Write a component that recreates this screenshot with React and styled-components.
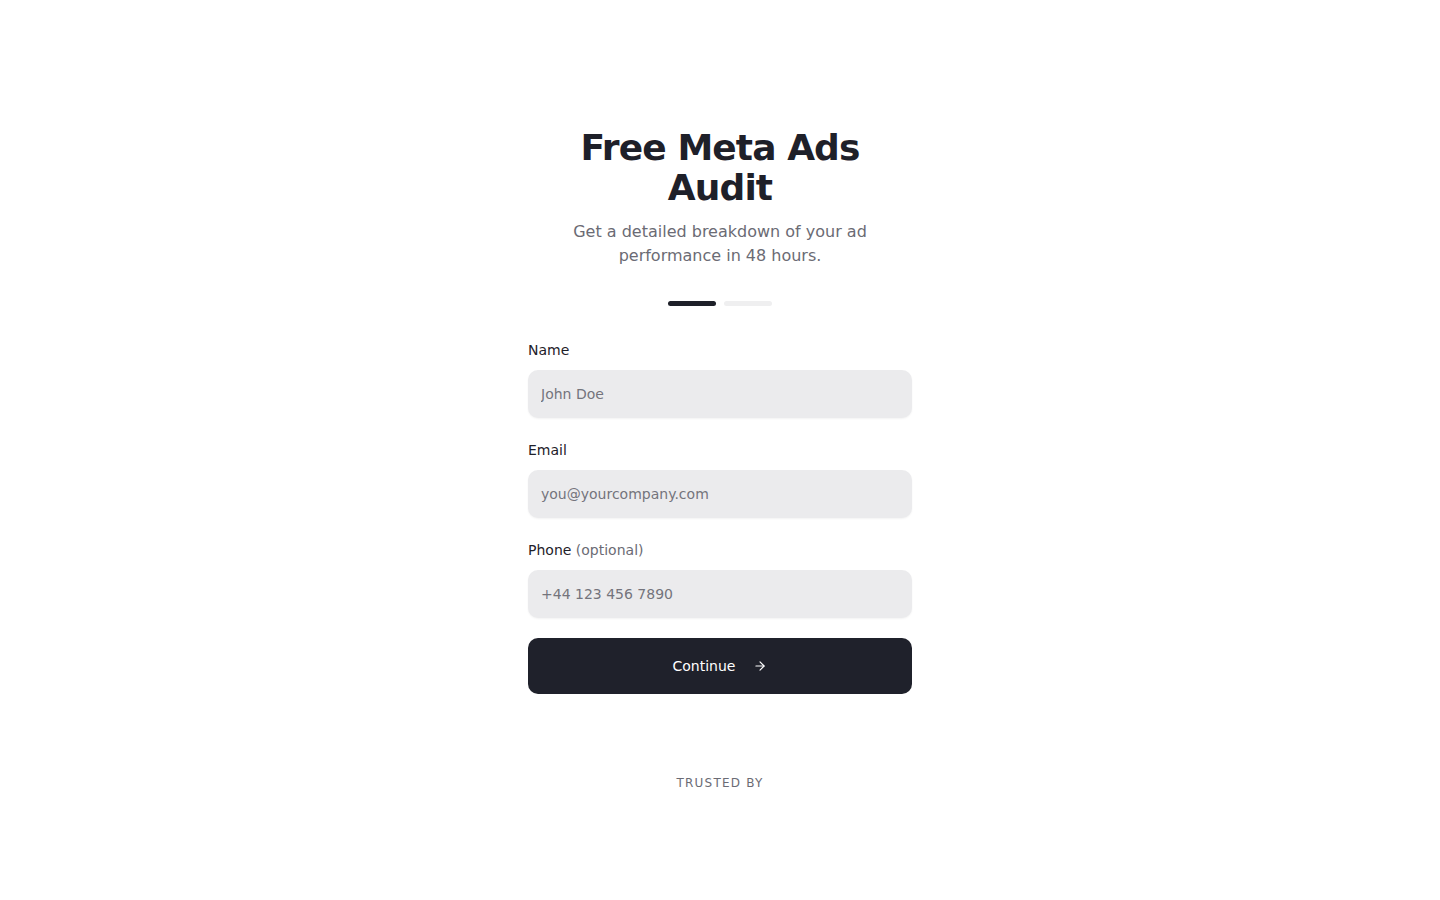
import React from "react";
import styled, { createGlobalStyle } from "styled-components";
import { ArrowRight } from "lucide-react";

const GlobalStyle = createGlobalStyle`
  * { box-sizing: border-box; }
  body {
    margin: 0;
    background: #ffffff;
    font-family: "DejaVu Sans", "Noto Sans", sans-serif;
    color: #1e2029;
  }
`;

const Page = styled.main`
  min-height: 100vh;
  display: flex;
  flex-direction: column;
  align-items: center;
  padding-top: 128px;
`;

const Header = styled.header`
  max-width: 320px;
  text-align: center;
`;

const Title = styled.h1`
  margin: 0;
  font-size: 36px;
  line-height: 40px;
  font-weight: 700;
  letter-spacing: -0.025em;
  color: #1e2029;
`;

const Subtitle = styled.p`
  margin: 12px 0 0;
  font-size: 16px;
  line-height: 24px;
  color: #6b6b74;
`;

const Steps = styled.div`
  display: flex;
  gap: 8px;
  margin-top: 33px;
`;

const Step = styled.span`
  width: 48px;
  height: 5px;
  border-radius: 999px;
  background: ${(p) => (p.$active ? "#1e2029" : "#efeff0")};
`;

const Form = styled.form`
  width: 384px;
  margin-top: 34px;
  display: flex;
  flex-direction: column;
  gap: 22px;
`;

const Field = styled.div`
  display: flex;
  flex-direction: column;
  gap: 10px;
`;

const Label = styled.label`
  font-size: 14px;
  line-height: 20px;
  color: #1e2029;
`;

const Hint = styled.span`
  color: #6b6b74;
`;

const Input = styled.input`
  height: 48px;
  width: 100%;
  border: none;
  border-radius: 10px;
  background: #ebebed;
  box-shadow: 0 1px 2px rgba(0, 0, 0, 0.05);
  padding: 0 13px;
  font-family: inherit;
  font-size: 14px;
  color: #1e2029;
  outline: none;

  &::placeholder {
    color: #74747c;
  }
`;

const Button = styled.button`
  margin-top: -2px;
  height: 56px;
  width: 100%;
  border: none;
  border-radius: 10px;
  background: #1f212b;
  color: #ffffff;
  font-family: inherit;
  font-size: 14px;
  display: flex;
  align-items: center;
  justify-content: center;
  gap: 18px;
  cursor: pointer;
`;

const Trusted = styled.p`
  margin: 81px 0 0;
  font-size: 12px;
  line-height: 16px;
  letter-spacing: 1.2px;
  color: #6b6b74;
  text-transform: uppercase;
`;

const fields = [
  { id: "name", label: "Name", placeholder: "John Doe", type: "text" },
  { id: "email", label: "Email", placeholder: "you@yourcompany.com", type: "email" },
  { id: "phone", label: "Phone", hint: "(optional)", placeholder: "+44 123 456 7890", type: "tel" },
];

const App = () => {
  return (
    <>
      <GlobalStyle />
      <Page>
        <Header>
          <Title>Free Meta Ads Audit</Title>
          <Subtitle>Get a detailed breakdown of your ad performance in 48 hours.</Subtitle>
        </Header>
        <Steps>
          <Step $active />
          <Step />
        </Steps>
        <Form onSubmit={(e) => e.preventDefault()}>
          {fields.map((f) => (
            <Field key={f.id}>
              <Label htmlFor={f.id}>
                {f.label} {f.hint && <Hint>{f.hint}</Hint>}
              </Label>
              <Input id={f.id} type={f.type} placeholder={f.placeholder} />
            </Field>
          ))}
          <Button type="submit">
            Continue
            <ArrowRight size={14} strokeWidth={2} />
          </Button>
        </Form>
        <Trusted>Trusted by</Trusted>
      </Page>
    </>
  );
};

export default App;
